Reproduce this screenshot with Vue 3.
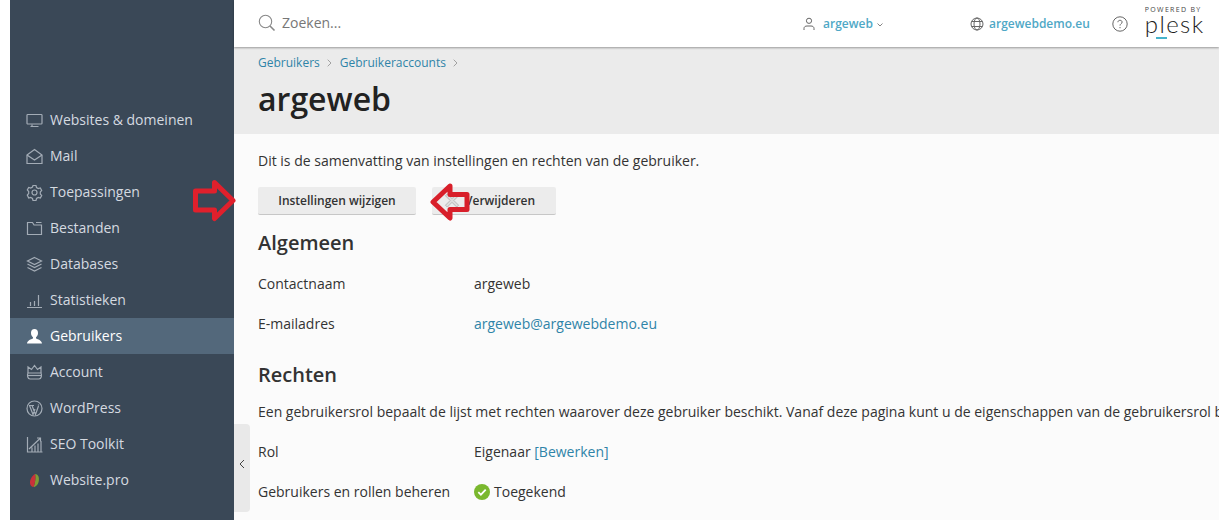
<template>
  <div class="page">
    <aside class="sidebar">
      <nav class="nav">
        <a v-for="item in navItems" :key="item.label" class="nav-item" :class="{ active: item.active }">
          <span class="nav-icon">
            <svg width="17" height="17" viewBox="0 0 17 17" fill="none" stroke="currentColor" stroke-width="1.2" v-html="item.icon"></svg>
          </span>
          {{ item.label }}
        </a>
      </nav>
      <button class="collapse">
        <svg width="6" height="10" viewBox="0 0 6 10" fill="none" stroke="#444" stroke-width="1"><path d="M5 1 1 5l4 4" /></svg>
      </button>
    </aside>

    <div class="main">
      <header class="topbar">
        <div class="search">
          <svg width="18" height="18" viewBox="0 0 18 18" fill="none" stroke="#888" stroke-width="1.1"><circle cx="7.5" cy="7.5" r="6.2" /><path d="m12 12 4.5 4.5" stroke-width="1.6" /></svg>
          <span>Zoeken...</span>
        </div>
        <div class="user">
          <svg width="12" height="14" viewBox="0 0 12 14" fill="none" stroke="#666" stroke-width="1"><circle cx="6" cy="3.8" r="2.6" /><path d="M1 13v-1.5C1 9.8 2.3 9 4 9h4c1.700 0 3 .8 3 2.500V13" /></svg>
          <a>argeweb</a>
          <svg class="caret" width="6" height="4" viewBox="0 0 6 4" fill="none" stroke="#777" stroke-width=".9"><path d="m.5.5 2.500 2.500L5.500.5" /></svg>
        </div>
        <div class="domain">
          <svg width="14" height="14" viewBox="0 0 14 14" fill="none" stroke="#666" stroke-width="1"><circle cx="7" cy="7" r="6" /><ellipse cx="7" cy="7" rx="3" ry="6" /><path d="M1.500 4.500h11M1.500 9.500h11" /></svg>
          <a>argewebdemo.eu</a>
        </div>
        <svg class="help" width="16" height="16" viewBox="0 0 16 16" fill="none" stroke="#666" stroke-width="1"><circle cx="8" cy="8" r="7.200" /><path d="M5.900 6.200C6 4.900 6.900 4.300 8 4.300c1.200 0 2.100.7 2.100 1.800 0 1.700-2.100 1.600-2.100 3.500" /><path d="M8 11v1.200" /></svg>
        <div class="brand">
          <span class="powered">POWERED BY</span>
          <span class="plesk">plesk</span>
          <span class="underline"></span>
        </div>
      </header>

      <section class="title-area">
        <div class="crumbs">
          <a>Gebruikers</a>
          <svg width="5" height="8" viewBox="0 0 5 8" fill="none" stroke="#999" stroke-width=".9"><path d="m.7.7 3.300 3.300L.7 7.300" /></svg>
          <a>Gebruikeraccounts</a>
          <svg width="5" height="8" viewBox="0 0 5 8" fill="none" stroke="#999" stroke-width=".9"><path d="m.7.7 3.300 3.300L.7 7.300" /></svg>
        </div>
        <h1>argeweb</h1>
      </section>

      <section class="content">
        <p class="intro">Dit is de samenvatting van instellingen en rechten van de gebruiker.</p>
        <div class="buttons">
          <button class="btn wide">Instellingen wijzigen</button>
          <button class="btn del">
            <svg width="16" height="15" viewBox="0 0 16 16" fill="#ddd" stroke="#aaa" stroke-width=".8"><path d="M3 1 8 6l5-5 2 2-5 5 5 5-2 2-5-5-5 5-2-2 5-5-5-5z" /></svg>
            Verwijderen
          </button>
        </div>

        <h2>Algemeen</h2>
        <div class="row first"><span class="key">Contactnaam</span><span>argeweb</span></div>
        <div class="row mail"><span class="key">E-mailadres</span><a>argeweb@argewebdemo.eu</a></div>

        <h2 class="rights">Rechten</h2>
        <p class="desc">Een gebruikersrol bepaalt de lijst met rechten waarover deze gebruiker beschikt. Vanaf deze pagina kunt u de eigenschappen van de gebruikersrol bekijken en bewerken.</p>
        <div class="row role"><span class="key">Rol</span><span>Eigenaar <a>[Bewerken]</a></span></div>
        <div class="row granted">
          <span class="key">Gebruikers en rollen beheren</span>
          <span class="ok">
            <svg width="16" height="16" viewBox="0 0 16 16"><circle cx="8" cy="8" r="8" fill="#7ab82e" /><path d="m4.300 8.200 2.600 2.500 4.800-5" fill="none" stroke="#fff" stroke-width="1.800" /></svg>
            Toegekend
          </span>
        </div>
      </section>
    </div>

    <svg class="arrow arrow-right" width="43" height="44" viewBox="0 0 43 44" fill="none" stroke="#e0202c" stroke-width="5" stroke-linejoin="round"><path d="M2.500 12h19V3.500L40 21.500 21.500 39.500V31H2.500z" /></svg>
    <svg class="arrow arrow-left" width="40" height="38" viewBox="0 0 40 38" fill="none" stroke="#d81f2a" stroke-width="5" stroke-linejoin="round"><path d="M37 11.500H20V3L3 19l17 16v-8.500h17z" /></svg>
  </div>
</template>

<script setup>
const navItems = [
  { label: 'Websites & domeinen', icon: '<rect x="1" y="2.500" width="15" height="9.500" rx=".8"/><path d="M6 12.500v1.500M4.500 14.500h8"/>' },
  { label: 'Mail', icon: '<path d="M1 7 8.500 1.500 16 7v8.500H1z"/><path d="m1 7 7.500 5L16 7"/>' },
  { label: 'Toepassingen', icon: '<circle cx="8.500" cy="8.500" r="2.500"/><path d="M7 1.500h3l.5 2 1.800 1 2-.6 1.400 2.600-1.400 1.500v2l1.400 1.500-1.400 2.600-2-.6-1.800 1-.5 2H7l-.5-2-1.800-1-2 .6L1.300 11l1.400-1.500v-2L1.300 6l1.400-2.600 2 .6 1.800-1z"/>' },
  { label: 'Bestanden', icon: '<path d="M1.500 2.500h5l1.500 2.500h7.500v9.500h-14zM10 2.500h5.500"/>' },
  { label: 'Databases', icon: '<path d="m8.500 1.500 7 3.500-7 3.500-7-3.500z"/><path d="m1.500 8 7 3.500 7-3.500M1.500 11.500l7 3.500 7-3.500"/>' },
  { label: 'Statistieken', icon: '<path d="M1 15.500h15M4.500 14v-4M8.500 14V9M12.500 14V3"/>' },
  { label: 'Gebruikers', active: true, icon: '<path fill="#fff" stroke="none" d="M8.500 1C6.300 1 5 2.500 5 5c0 2 .9 3.400 2 4.200v1.300c-2 1-5.500 1.500-6 5h15c-.5-3.500-4-4-6-5V9.200c1.100-.8 2-2.200 2-4.200 0-2.500-1.300-4-3.500-4z"/>' },
  { label: 'Account', icon: '<path d="M2 9V3l3.500 2.500L8.500 1.500l3 4L15 3v6"/><path d="M2 9h13c1 2 .5 6-2 6H4C1.500 15 1 11 2 9z"/><path d="M2 11.500h13"/>' },
  { label: 'WordPress', icon: '<circle cx="8.500" cy="8.500" r="7.500"/><path d="M3.500 5.500l3.500 9 2-5.500M6 5.500l3.500 9 3-8.500M3 5.500h5M12.500 4.500v1"/>' },
  { label: 'SEO Toolkit', icon: '<path d="M1.500 1v15h15M3 13 14 2.500M11 2h3.500v3.500M6 15.500v-4M9 15.500v-6M12 15.500V7.500M15 15.500V5"/>' },
  { label: 'Website.pro', icon: '<path fill="#7f9c36" stroke="none" d="M9 2c3 0 4.500 3 3.800 7-.6 3.500-3 6-5.300 6C9 12 10 6 9 2z"/><path fill="#c9323a" stroke="none" d="M9 2C6 4 3.800 7.500 4 11c.1 2.500 2 4 3.500 4C9 12 10 6 9 2z"/>' }
]
</script>

<style scoped>
.page {
  position: relative;
  display: flex;
  width: 1219px;
  height: 520px;
  overflow: hidden;
  background: #fff;
  font-family: "Open Sans", "Noto Sans", sans-serif;
  font-size: 14px;
  color: #333;
}

.sidebar {
  position: relative;
  flex: 0 0 224px;
  margin-left: 10px;
  padding-top: 102px;
  box-sizing: border-box;
  background: #3a4857;
}

.nav-item {
  display: flex;
  align-items: center;
  height: 36px;
  padding-left: 16px;
  color: #d5dae0;
  font-size: 14px;
  font-weight: 500;
  line-height: 34px;
}

.nav-item.active {
  background: #53687b;
  color: #fff;
}

.nav-icon {
  display: flex;
  width: 24px;
  color: #a3acb6;
}

.collapse {
  position: absolute;
  left: 224px;
  top: 424px;
  display: flex;
  align-items: center;
  justify-content: center;
  width: 16px;
  height: 88px;
  padding: 0 0 8px;
  border: 0;
  border-radius: 0 4px 4px 0;
  background: #e9e9e9;
}

.main {
  flex: 1;
  min-width: 0;
  display: flex;
  flex-direction: column;
  background: #fbfbfb;
}

.topbar {
  position: relative;
  z-index: 1;
  display: flex;
  align-items: center;
  flex: 0 0 47px;
  box-sizing: border-box;
  padding-left: 24px;
  background: #fff;
  box-shadow: 0 1px 2px rgba(0, 0, 0, .35);
}

.search {
  display: flex;
  align-items: center;
  gap: 6px;
  width: 545px;
  margin-top: -2px;
  color: #777;
  font-size: 14px;
}

.user, .domain {
  display: flex;
  align-items: center;
  font-size: 12px;
  font-weight: 600;
}

.user a, .domain a {
  color: #4fa8c6;
}

.user {
  gap: 8px;
  width: 167px;
}

.caret {
  margin-left: -4px;
  margin-top: 2px;
}

.domain {
  gap: 5px;
}

.help {
  margin-left: 22px;
}

.brand {
  position: relative;
  width: 60px;
  height: 47px;
  margin-left: 17px;
  flex-shrink: 0;
}

.powered {
  position: absolute;
  left: 0;
  top: 7px;
  font-size: 7px;
  line-height: 6px;
  letter-spacing: 1.300px;
  white-space: nowrap;
  color: #444;
}

.plesk {
  position: absolute;
  left: 0;
  top: 15px;
  font-size: 24px;
  font-family: "Lato", sans-serif;
  font-weight: 300;
  letter-spacing: 1.400px;
  color: #1c1c1c;
  line-height: 18px;
}

.underline {
  position: absolute;
  left: 11px;
  top: 37px;
  width: 11px;
  height: 2px;
  background: #46b3cb;
}

.title-area {
  flex: 0 0 87px;
  box-sizing: border-box;
  padding: 7px 24px 0;
  background: #ebebeb;
}

.crumbs {
  display: flex;
  align-items: center;
  gap: 7.500px;
  font-size: 12px;
  line-height: 17px;
}

.crumbs a {
  color: #2f84a8;
}

h1 {
  margin: 5px 0 0;
  font-size: 32px;
  font-weight: 600;
  line-height: 46px;
  color: #222;
}

.content {
  padding: 17px 24px 0;
  white-space: nowrap;
  font-size: 14px;
  line-height: 20px;
}

.intro, .desc {
  margin: 0;
}

.buttons {
  display: flex;
  gap: 16px;
  margin-top: 16px;
}

.btn {
  display: flex;
  align-items: center;
  justify-content: center;
  height: 28px;
  padding: 0;
  border: 0;
  border-bottom: 1px solid #c7c7c7;
  border-radius: 2px;
  background: #ececec;
  color: #333;
  font: 600 12px "Open Sans", sans-serif;
}

.wide {
  width: 158px;
}

.del {
  width: 124px;
  justify-content: flex-start;
  gap: 5px;
  padding-left: 12px;
}

h2 {
  margin: 14px 0 0;
  font-size: 20px;
  font-weight: 600;
  line-height: 28px;
  color: #333;
}

.row {
  display: flex;
  align-items: center;
  height: 20px;
}

.row a {
  color: #2f84a8;
}

.key {
  width: 216px;
}

.first {
  margin-top: 17px;
}

.mail {
  margin-top: 20px;
}

h2.rights {
  margin-top: 27px;
}

.desc {
  margin-top: 13px;
}

.role {
  margin-top: 20px;
}

.granted {
  margin-top: 20px;
}

.ok {
  display: flex;
  align-items: center;
  gap: 4px;
}

.arrow {
  position: absolute;
}

.arrow-right {
  left: 193px;
  top: 179px;
}

.arrow-left {
  left: 430px;
  top: 183px;
}
</style>
